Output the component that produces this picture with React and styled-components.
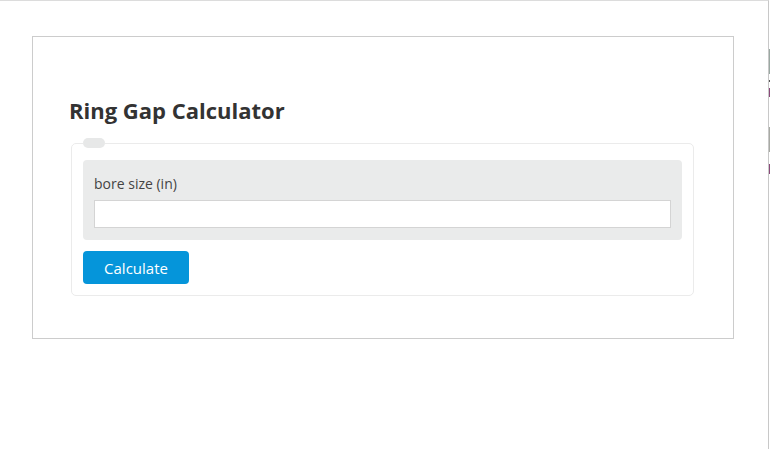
import React from 'react'
import styled, { createGlobalStyle } from 'styled-components'

const GlobalStyle = createGlobalStyle`
  html, body {
    margin: 0;
    padding: 0;
    background: #fff;
    overflow: hidden;
  }
  body {
    font-family: "Open Sans", "Noto Sans", sans-serif;
    color: #333;
  }
`

const Shell = styled.div`
  display: flex;
  width: 770px;
  height: 449px;
`

const Page = styled.div`
  box-sizing: border-box;
  width: 769px;
  height: 449px;
  flex-shrink: 0;
  border-top: 1px solid #dcdcdc;
  border-right: 1px solid #c8c8c8;
  padding: 35px 0 0 32px;
`

// sliver of the window next door
const Edge = styled.div`
  width: 1px;
  flex-shrink: 0;
  display: flex;
  flex-direction: column;
`

const Sliver = styled.div`
  height: ${p => p.h}px;
  background: ${p => p.c || 'transparent'};
`

const Card = styled.div`
  box-sizing: border-box;
  width: 702px;
  height: 303px;
  border: 1px solid #cccccc;
  padding: 58px 37px 0 36px;
`

const Title = styled.h2`
  margin: 0 0 13px;
  font-size: 22px;
  line-height: 30px;
  font-weight: 700;
  color: #333;
`

const Fieldset = styled.fieldset`
  margin: 0 2px;
  padding: 12px 11px 11px;
  border: 1px solid #ebebeb;
  border-radius: 5px;
`

const Legend = styled.legend`
  width: 22px;
  height: 10px;
  padding: 0;
  margin-left: 0;
  background: #e7e8e8;
  border-radius: 5px;
`

const Row = styled.div`
  background: #eaebeb;
  border-radius: 4px;
  padding: 11px 11px 12px;
`

const Label = styled.label`
  display: block;
  font-size: 14px;
  line-height: 24px;
  color: #444;
  margin: 1px 0 4px;
`

const Input = styled.input`
  box-sizing: border-box;
  display: block;
  width: 100%;
  height: 28px;
  border: 1px solid #d4d4d4;
  background: #fff;
  outline: none;
`

const Button = styled.button`
  display: block;
  margin-top: 11px;
  width: 106px;
  height: 33px;
  border: none;
  border-radius: 4px;
  background: #0595da;
  color: #fff;
  font-family: "Open Sans", "Noto Sans", sans-serif;
  font-size: 15px;
  cursor: pointer;
`

const slivers = [
  { h: 49 },
  { h: 25, c: '#9aa8a2' },
  { h: 6 },
  { h: 2, c: '#555' },
  { h: 6 },
  { h: 9, c: '#8a4a7a' },
  { h: 30 },
  { h: 25, c: '#a8aaa4' },
  { h: 12 },
  { h: 10, c: '#8a4a7a' },
]

const App = () => {
  return (
    <Shell>
      <GlobalStyle />
      <Page>
        <Card>
          <Title>Ring Gap Calculator</Title>
          <Fieldset>
            <Legend />
            <Row>
              <Label htmlFor="bore">bore size (in)</Label>
              <Input id="bore" type="text" />
            </Row>
            <Button>Calculate</Button>
          </Fieldset>
        </Card>
      </Page>
      <Edge>
        {slivers.map((s, i) => (
          <Sliver key={i} h={s.h} c={s.c} />
        ))}
      </Edge>
    </Shell>
  )
}

export default App
